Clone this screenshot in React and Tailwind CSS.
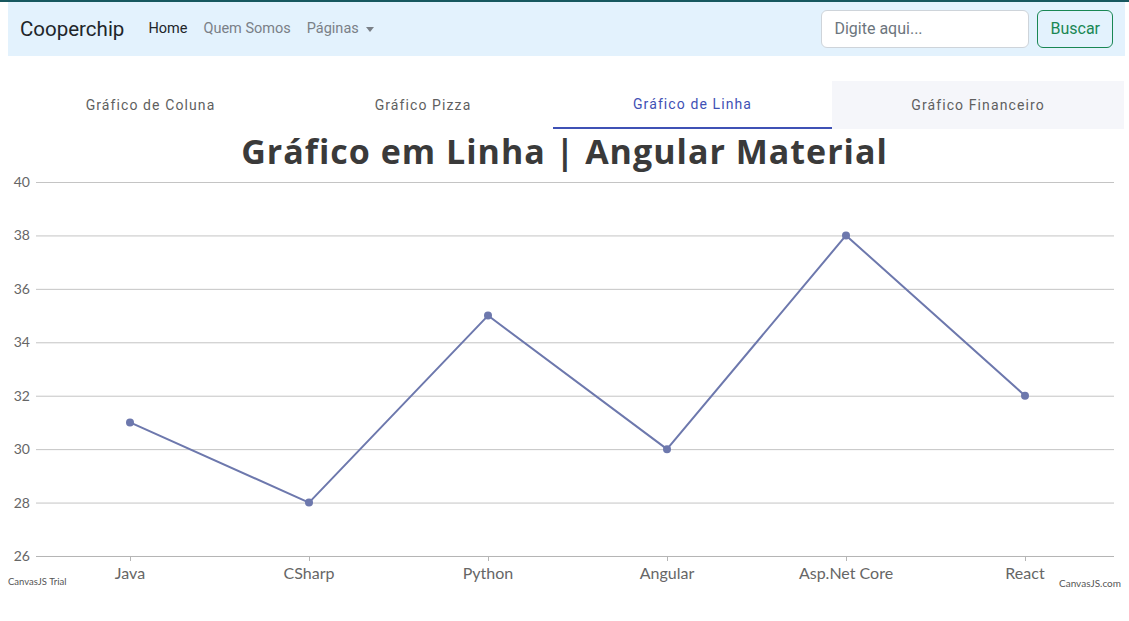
import React from 'react'

const data = [
  { label: 'Java', y: 31 },
  { label: 'CSharp', y: 28 },
  { label: 'Python', y: 35 },
  { label: 'Angular', y: 30 },
  { label: 'Asp.Net Core', y: 38 },
  { label: 'React', y: 32 },
]

const ticks = [40, 38, 36, 34, 32, 30, 28, 26]

// chart geometry (svg starts at page y=172)
const top = 10
const step = 26.714
const yOf = v => top + (40 - v) * step
const xOf = i => 130 + i * 179

function LineChart() {
  const pts = data.map((d, i) => `${xOf(i)},${yOf(d.y)}`).join(' ')
  return (
    <svg width="1129" height="449" className="block" style={{ fontFamily: 'Lato, "Open Sans", sans-serif' }}>
      {ticks.map(t => (
        <g key={t}>
          <line x1="36" x2="1114" y1={yOf(t) + 0.5} y2={yOf(t) + 0.5} stroke={t === 26 ? '#b5b5b5' : '#c4c4c4'} strokeWidth="1" />
          <text x="30" y={yOf(t) + 5} textAnchor="end" fontSize="14" fill="#666">{t}</text>
        </g>
      ))}
      {data.map((d, i) => (
        <g key={d.label}>
          <line x1={xOf(i) + 0.5} x2={xOf(i) + 0.5} y1={yOf(26)} y2={yOf(26) + 5} stroke="#b5b5b5" />
          <text x={xOf(i)} y={yOf(26) + 23} textAnchor="middle" fontSize="16" fill="#666">{d.label}</text>
        </g>
      ))}
      <polyline points={pts} fill="none" stroke="#6d78ad" strokeWidth="2" strokeLinejoin="round" />
      {data.map((d, i) => (
        <circle key={i} cx={xOf(i)} cy={yOf(d.y)} r="4" fill="#6d78ad" />
      ))}
      <text x="8" y={yOf(26) + 29} fontSize="9.5" fill="#555">CanvasJS Trial</text>
      <text x="1121" y={yOf(26) + 31} textAnchor="end" fontSize="10" fill="#555">CanvasJS.com</text>
    </svg>
  )
}

const tabs = [
  { label: 'Gráfico de Coluna', w: 'w-[285px]' },
  { label: 'Gráfico Pizza', w: 'w-[260px]' },
  { label: 'Gráfico de Linha', w: 'w-[279px]', active: true },
  { label: 'Gráfico Financeiro', w: 'w-[292px]', hover: true },
]

export default function App() {
  return (
    <div className="min-h-screen bg-white border-t-2 border-[#17585f]" style={{ fontFamily: 'Roboto, "Noto Sans", sans-serif' }}>
      {/* Navbar */}
      <nav className="ml-2 w-[1117px] h-[54px] bg-[#e3f2fd] flex items-center px-3">
        <span className="text-[20.5px] text-[#212529] mr-6">Cooperchip</span>
        <div className="flex items-center gap-4 text-[14.5px]">
          <span className="text-[#212529]">Home</span>
          <span className="text-[#7a8087]">Quem Somos</span>
          <span className="text-[#7a8087] flex items-center">
            Páginas
            <span className="ml-[7px] border-x-[4px] border-x-transparent border-t-[5px] border-t-[#7a8087] w-0 h-0" />
          </span>
        </div>
        <div className="ml-auto flex items-center gap-2">
          <div className="w-[208px] h-[38px] bg-white border border-[#ced4da] rounded-md flex items-center px-[12px] text-[16px] text-[#6c757d]">
            Digite aqui...
          </div>
          <div className="h-[38px] px-[12px] border border-[#198754] rounded-md flex items-center text-[16px] text-[#198754]">
            Buscar
          </div>
        </div>
      </nav>

      {/* Tabs */}
      <div className="mt-[25px] ml-2 flex h-[48px]">
        {tabs.map(t => (
          <div
            key={t.label}
            className={`${t.w} shrink-0 flex items-center justify-center text-[14px] tracking-[1.1px] ${
              t.active ? 'text-[#3f51b5] border-b-2 border-[#3f51b5]' : 'text-[#5f5f5f]'
            } ${t.hover ? 'bg-[#f5f6fa]' : ''}`}
          >
            {t.label}
          </div>
        ))}
      </div>

      {/* Title */}
      <div className="h-[43px] flex items-center justify-center">
        <h1 className="text-[34px] font-bold text-[#3a3a3a] leading-none tracking-[1px]" style={{ fontFamily: '"Open Sans", sans-serif' }}>
          Gráfico em Linha | Angular Material
        </h1>
      </div>

      <LineChart />
    </div>
  )
}
